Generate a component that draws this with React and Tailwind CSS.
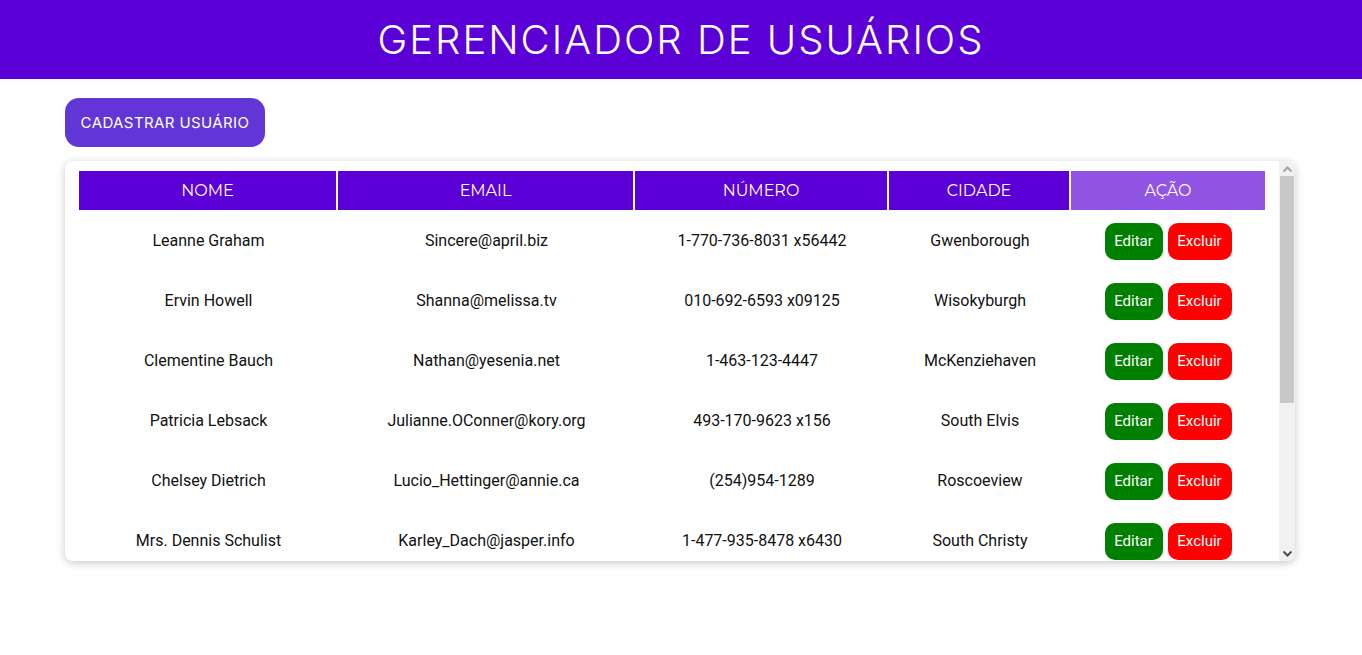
import React from "react";

const users = [
  { name: "Leanne Graham", email: "Sincere@april.biz", phone: "1-770-736-8031 x56442", city: "Gwenborough" },
  { name: "Ervin Howell", email: "Shanna@melissa.tv", phone: "010-692-6593 x09125", city: "Wisokyburgh" },
  { name: "Clementine Bauch", email: "Nathan@yesenia.net", phone: "1-463-123-4447", city: "McKenziehaven" },
  { name: "Patricia Lebsack", email: "Julianne.OConner@kory.org", phone: "493-170-9623 x156", city: "South Elvis" },
  { name: "Chelsey Dietrich", email: "Lucio_Hettinger@annie.ca", phone: "(254)954-1289", city: "Roscoeview" },
  { name: "Mrs. Dennis Schulist", email: "Karley_Dach@jasper.info", phone: "1-477-935-8478 x6430", city: "South Christy" },
  { name: "Kurtis Weissnat", email: "Telly.Hoeger@billy.biz", phone: "210.067.6132", city: "Howemouth" },
  { name: "Nicholas Runolfsdottir V", email: "Sherwood@rosamond.me", phone: "586.493.6943 x140", city: "Aliyaview" },
  { name: "Glenna Reichert", email: "Chaim_McDermott@dana.io", phone: "(775)976-6794 x41206", city: "Bartholomebury" },
  { name: "Clementina DuBuque", email: "Rey.Padberg@karina.biz", phone: "024-648-3804", city: "Lebsackbury" },
];

const head = "font-['Montserrat','Inter',sans-serif] text-[16px] font-normal text-white h-[39px] p-0";

// Chevron used on the scrollbar buttons
const Chevron = ({ up, color }) => (
  <svg width="9" height="6" viewBox="0 0 9 6">
    <path
      d={up ? "M0.5 5.5 L4.5 1.5 L8.5 5.5" : "M0.5 0.5 L4.5 4.5 L8.5 0.5"}
      fill="none"
      stroke={color}
      strokeWidth="2"
    />
  </svg>
);

const App = () => {
  return (
    <div className="min-h-screen bg-white font-['Roboto',sans-serif]">
      {/* HEADER */}
      <header className="h-[79px] bg-[#5b00d6] flex items-center justify-center">
        <h1 className="font-['Inter',sans-serif] font-light text-[40px] tracking-[2px] text-white pt-[1px]">
          GERENCIADOR DE USUÁRIOS
        </h1>
      </header>

      <div className="pl-[65px] pr-[67px] pt-[19px]">
        <button className="h-[49px] w-[200px] rounded-[14px] bg-[#6236d6] text-white text-[15px] tracking-[0.4px] font-['Inter',sans-serif] pt-[1px]">
          CADASTRAR USUÁRIO
        </button>

        {/* TABLE CARD */}
        <div className="mt-[14px] h-[400px] flex overflow-hidden rounded-lg bg-white shadow-[0_2px_8px_rgba(0,0,0,0.22)]">
          <div className="flex-1 overflow-hidden px-[14px] pt-[10px]">
            <table className="w-full border-separate border-spacing-0 text-[16px] text-[#111]">
              <thead>
                <tr>
                  <th className={`${head} w-[259px] bg-[#5b00d6] border-r-2 border-white`}>NOME</th>
                  <th className={`${head} w-[297px] bg-[#5b00d6] border-r-2 border-white`}>EMAIL</th>
                  <th className={`${head} w-[254px] bg-[#5b00d6] border-r-2 border-white`}>NÚMERO</th>
                  <th className={`${head} w-[182px] bg-[#5b00d6] border-r-2 border-white`}>CIDADE</th>
                  <th className={`${head} bg-[#9254e4]`}>AÇÃO</th>
                </tr>
              </thead>
              <tbody>
                {users.map((u) => (
                  <tr key={u.email} className="h-[60px] text-center">
                    <td className="pt-[2px]">{u.name}</td>
                    <td className="pt-[2px]">{u.email}</td>
                    <td className="pt-[2px]">{u.phone}</td>
                    <td className="pt-[2px]">{u.city}</td>
                    <td className="pt-[2px]">
                      <div className="flex justify-center gap-[5px]">
                        <button className="h-[37px] w-[58px] rounded-[10px] bg-[#008000] text-white text-[15px]">
                          Editar
                        </button>
                        <button className="h-[37px] w-[64px] rounded-[10px] bg-[#ff0000] text-white text-[15px]">
                          Excluir
                        </button>
                      </div>
                    </td>
                  </tr>
                ))}
              </tbody>
            </table>
          </div>

          {/* SCROLLBAR */}
          <div className="w-[16px] flex flex-col bg-[#f1f1f1]">
            <div className="h-[15px] flex items-center justify-center">
              <Chevron up color="#a3a3a3" />
            </div>
            <div className="flex-1">
              <div className="h-[227px] mx-[1px] bg-[#c8c8c8]" />
            </div>
            <div className="h-[15px] flex items-center justify-center">
              <Chevron color="#505050" />
            </div>
          </div>
        </div>
      </div>
    </div>
  );
};

export default App;
